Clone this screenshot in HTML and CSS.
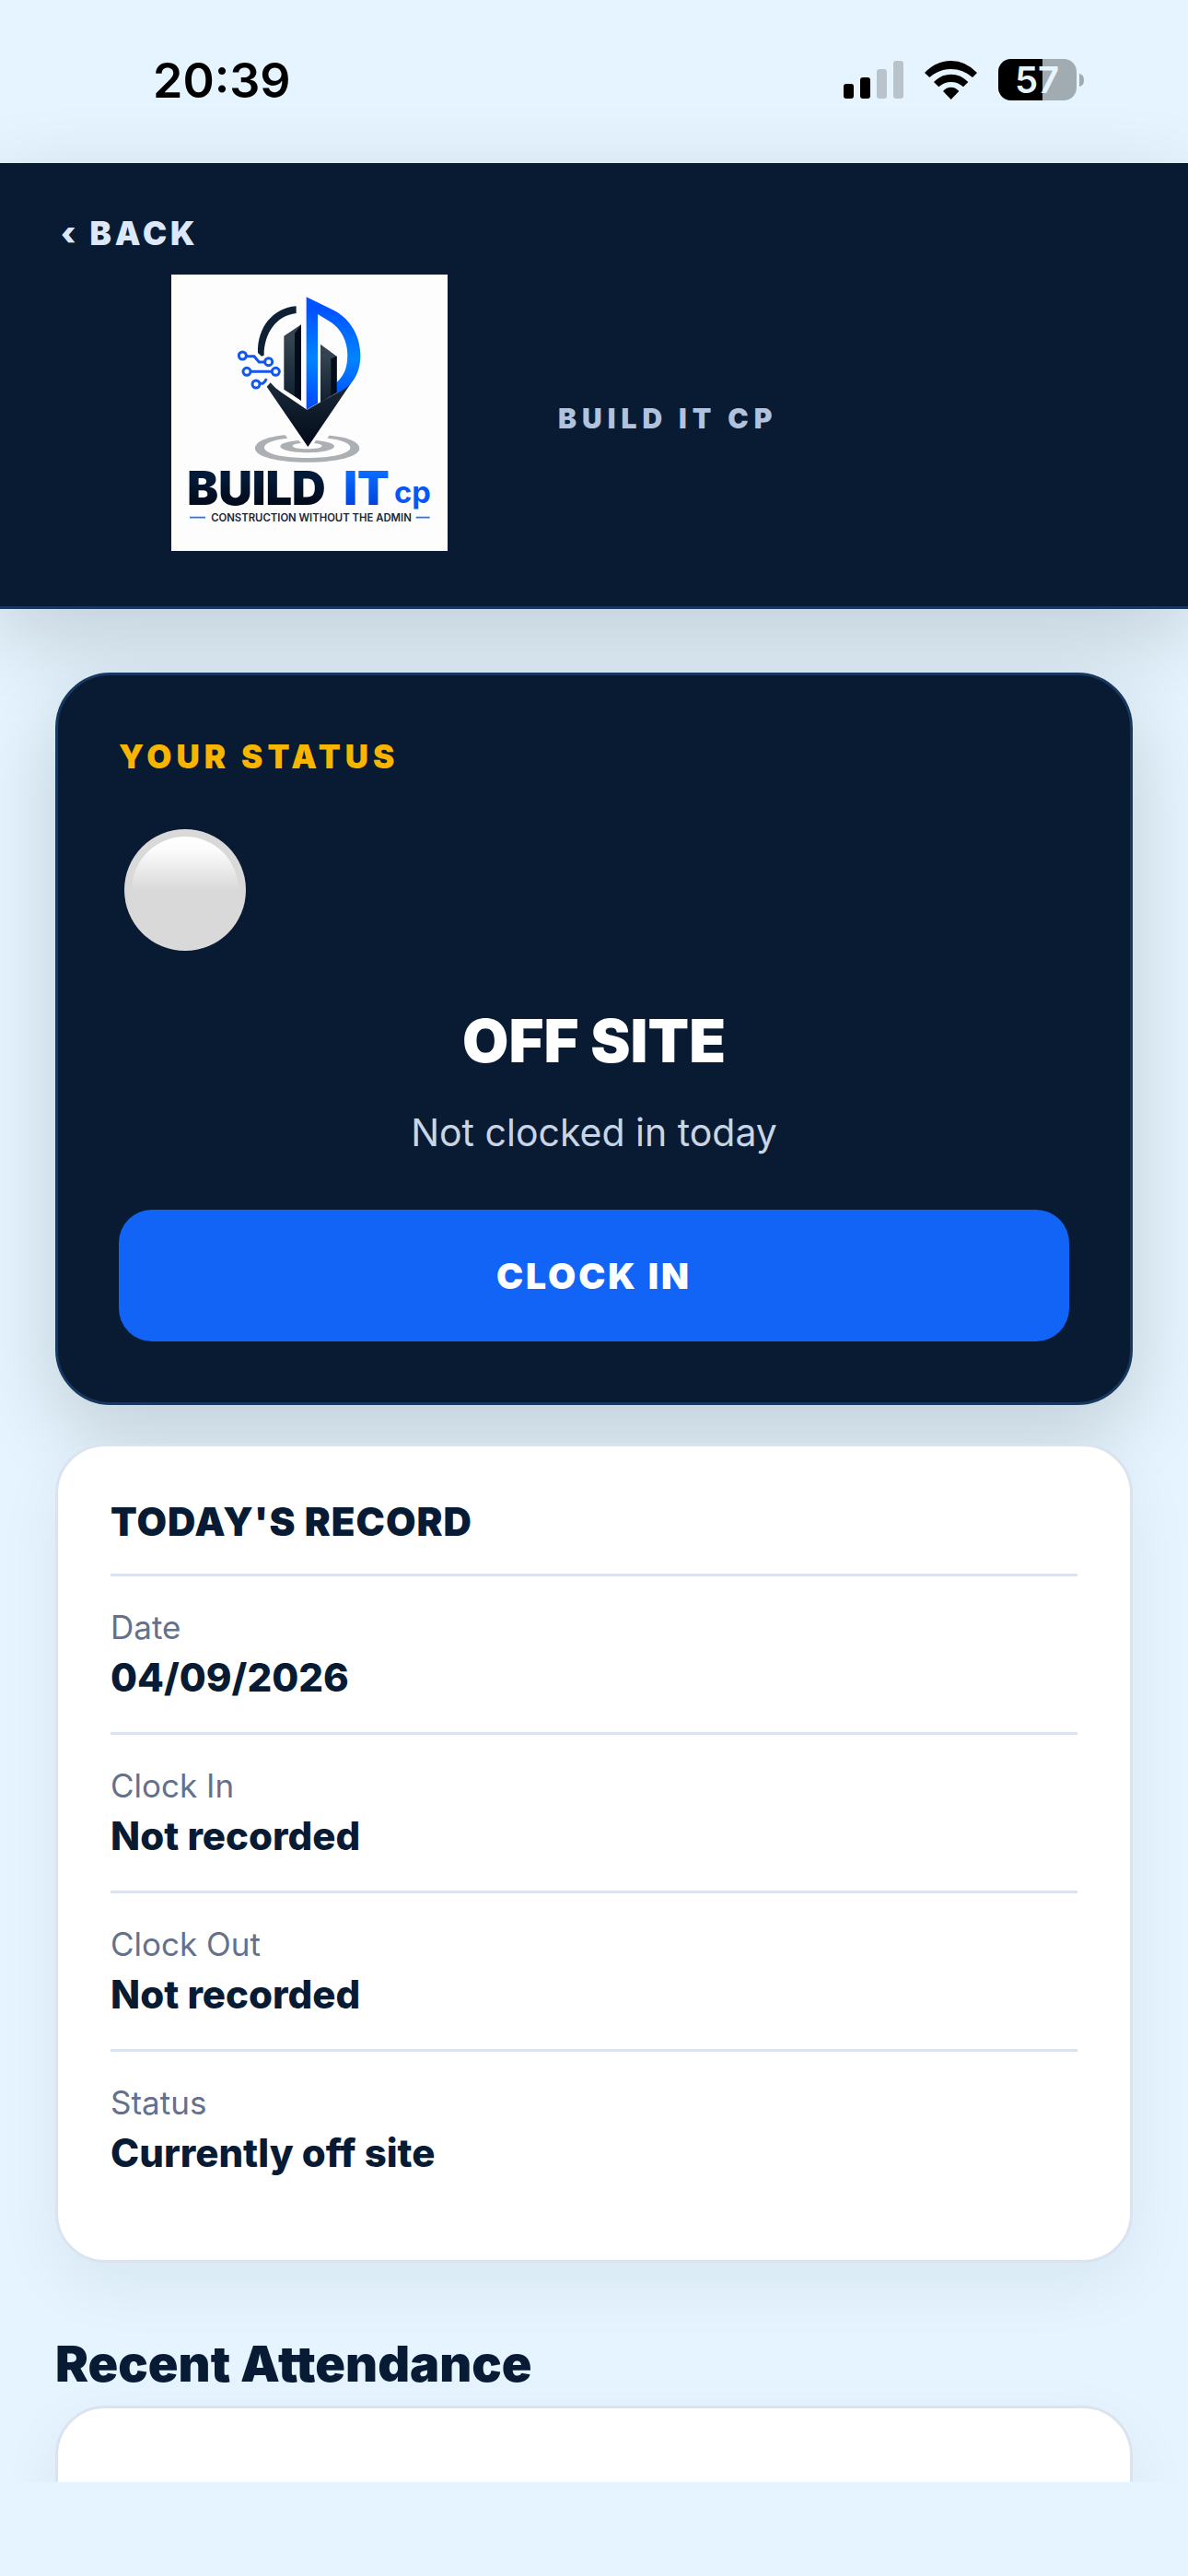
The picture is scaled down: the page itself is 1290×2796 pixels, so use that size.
FILE: index.html
```html
<!DOCTYPE html>
<html lang="en">
<head>
  <meta charset="UTF-8">
  <meta name="viewport" content="width=device-width, initial-scale=1.0">
  <title>Build It CP - Attendance</title>
  <link rel="stylesheet" href="styles.css">
</head>
<body>
  <div class="status-bar">
    <span class="time">20:39</span>
    <div class="status-icons">
      <svg class="signal" width="65" height="41" viewBox="0 0 65 41" aria-hidden="true">
        <rect x="0" y="25" width="11" height="16" rx="3"/>
        <rect x="18" y="18" width="11" height="23" rx="3"/>
        <rect x="36" y="9" width="11" height="32" rx="3" fill="#b8c3cc"/>
        <rect x="54" y="0" width="11" height="41" rx="3" fill="#b8c3cc"/>
      </svg>
      <svg class="wifi" width="57" height="42" viewBox="0 0 171 126" aria-hidden="true">
        <path d="M0 39 Q38 0 86 0 Q134 0 171 39 L156 54 Q125 27 86 27 Q47 27 16 54 Z"/>
        <path d="M30 69 Q54 44 86 44 Q118 44 142 69 L126 85 Q108 69 86 69 Q64 69 46 85 Z"/>
        <path d="M60 99 Q71 86 86 86 Q101 86 112 99 L86 126 Z"/>
      </svg>
      <svg class="battery" width="93" height="45" viewBox="0 0 93 45" aria-hidden="true">
        <defs>
          <clipPath id="shell"><rect width="85" height="45" rx="14"/></clipPath>
        </defs>
        <g clip-path="url(#shell)">
          <rect width="85" height="45" fill="#a0abb2"/>
          <rect width="48" height="45"/>
        </g>
        <path d="M88 16 Q93 17 93 23 Q93 29 88 30 Z" fill="#a0abb2"/>
        <text class="battery-text" x="42" y="37" text-anchor="middle">57</text>
      </svg>
    </div>
  </div>

  <header class="header">
    <a class="back" href="#">‹ BACK</a>
    <div class="brand">
      <svg class="logo" viewBox="18 24 900 900" role="img" aria-label="Build It CP, construction without the admin">
        <defs>
          <linearGradient id="blue" x1="0" y1="0" x2="0" y2="1">
            <stop offset="0.1" stop-color="#0052ff"/>
            <stop offset="0.55" stop-color="#0084ff"/>
            <stop offset="0.9" stop-color="#0052ff"/>
          </linearGradient>
          <linearGradient id="tower" x1="0" y1="0" x2="0" y2="1">
            <stop offset="0.2" stop-color="#35424f"/>
            <stop offset="1" stop-color="#10202f"/>
          </linearGradient>
          <linearGradient id="pin" x1="0" y1="0" x2="0" y2="1">
            <stop offset="0" stop-color="#1c2a3a"/>
            <stop offset="1" stop-color="#000a18"/>
          </linearGradient>
          <linearGradient id="name" x1="0" y1="0" x2="0" y2="1">
            <stop offset="0.3" stop-color="#031a38"/>
            <stop offset="0.9" stop-color="#000814"/>
          </linearGradient>
          <linearGradient id="it" x1="0" y1="0" x2="0" y2="1">
            <stop offset="0.2" stop-color="#0a6cff"/>
            <stop offset="0.85" stop-color="#0040dc"/>
          </linearGradient>
        </defs>
        <rect x="18" y="24" width="900" height="900" fill="#fdfdfd"/>

        <!-- rings under the pin -->
        <g fill="#acafb3">
          <path d="M389 547 C330 552 291 568 291 590 C291 617 367 635 461 635 C555 635 631 617 631 590 C631 568 590 552 532 548 L527 557 C573 562 601 573 601 587 C601 607 540 621 461 621 C382 621 321 607 321 587 C321 573 348 562 397 557 Z"/>
          <path d="M433 564 C398 567 373 574 373 583 C373 595 412 604 461 604 C510 604 549 595 549 583 C549 574 524 567 489 564 L483 573 C500 575 509 578 509 582 C509 588 488 592 461 592 C434 592 413 588 413 582 C413 578 422 575 441 573 Z"/>
        </g>

        <!-- map pin -->
        <path d="M425 127 C350 133 298 195 300 279 L312 290 L320 287 C320 215 360 157 425 150 Z" fill="#0d2034"/>
        <path d="M341 376 Q354 393 376 407 L460 464 L560 408 Q590 390 606 374 L463 585 L329 389 Z" fill="url(#pin)"/>
        <path d="M385 224 L441 187 V434 L385 398 Z" fill="url(#tower)"/>
        <path d="M420 216 L441 187 V434 L420 420 Z" fill="#020d1c"/>
        <path d="M458 97 L550 142 C602 170 634 225 634 288 C634 350 603 393 556 410 V376 C580 355 592 328 592 286 C592 240 570 200 536 178 L495 153 V443 L458 464 Z" fill="url(#blue)"/>
        <path d="M504 251 L557 290 V408 L504 441 Z" fill="url(#tower)"/>
        <path d="M538 298 L557 290 V408 L538 419 Z" fill="#020d1c"/>

        <!-- circuit -->
        <g fill="none" stroke="#1257ee" stroke-width="9">
          <circle cx="250" cy="288" r="12"/>
          <circle cx="335" cy="308" r="12"/>
          <circle cx="264" cy="340" r="12"/>
          <circle cx="358" cy="340" r="12"/>
          <circle cx="294" cy="381" r="12"/>
          <path d="M264 290 H288 L304 309 H322 M278 340 H344 M308 379 H316 Q324 374 328 363"/>
        </g>

        <text class="logo-name" x="70" y="775" fill="url(#name)">BUILD</text>
        <text class="logo-name" x="580" y="775" fill="url(#it)">IT</text>
        <text class="logo-cp" x="744" y="769" fill="#0a55f5">cp</text>
        <path d="M78 815 H129 M815 815 H860" stroke="#2a70f5" stroke-width="5"/>
        <text class="logo-tagline" x="474" y="827" text-anchor="middle" fill="#1b2538">CONSTRUCTION WITHOUT THE ADMIN</text>
      </svg>
      <span class="brand-name">BUILD IT CP</span>
    </div>
  </header>

  <main class="content">
    <section class="status-card">
      <h2 class="eyebrow">YOUR STATUS</h2>
      <div class="status-light"></div>
      <p class="status-title">OFF SITE</p>
      <p class="status-note">Not clocked in today</p>
      <button class="clock-button" type="button">CLOCK IN</button>
    </section>

    <section class="card record">
      <h2 class="record-title">TODAY'S RECORD</h2>
      <dl class="record-list">
        <div class="record-row">
          <dt>Date</dt>
          <dd>04/09/2026</dd>
        </div>
        <div class="record-row">
          <dt>Clock In</dt>
          <dd>Not recorded</dd>
        </div>
        <div class="record-row">
          <dt>Clock Out</dt>
          <dd>Not recorded</dd>
        </div>
        <div class="record-row">
          <dt>Status</dt>
          <dd>Currently off site</dd>
        </div>
      </dl>
    </section>

    <h2 class="section-title">Recent Attendance</h2>
    <section class="card history"></section>
  </main>
</body>
</html>
```
FILE: styles.css
```css
* {
  box-sizing: border-box;
}

body {
  margin: 0;
  height: 100vh;
  padding-bottom: 102px;
  display: flex;
  flex-direction: column;
  font-family: Inter, "Liberation Sans", sans-serif;
  background: #e5f4fe;
  color: #081b34;
}

h2, p, dl, dd {
  margin: 0;
}

/* Phone status bar */
.status-bar {
  flex: none;
  height: 177px;
  padding: 0 113px 4px 166px;
  display: flex;
  align-items: center;
  justify-content: space-between;
}

.time {
  padding-top: 2px;
  font-size: 52px;
  font-weight: 600;
  line-height: 64px;
  color: #000;
}

.status-icons {
  display: flex;
  align-items: center;
  gap: 23px;
}

.battery {
  overflow: visible;
}

.battery-text {
  font-size: 40px;
  font-weight: 600;
  fill: #e5f4fe;
}

/* Header */
.header {
  flex: none;
  padding: 52px 60px 60px;
  background: #081b33;
  border-bottom: 3px solid #17375e;
  box-shadow: 0 30px 90px rgba(0, 0, 0, 0.16);
}

.back {
  display: block;
  width: fit-content;
  padding: 0 6px;
  margin-bottom: 21px;
  font-size: 35px;
  font-weight: 900;
  line-height: 48px;
  letter-spacing: 4px;
  color: #dce8f7;
  text-decoration: none;
}

.brand {
  display: flex;
  align-items: center;
  gap: 120px;
  padding-left: 126px;
}

.logo {
  width: 300px;
  height: 300px;
}

.logo-name {
  font-size: 152px;
  font-weight: 900;
}

.logo-cp {
  font-size: 98px;
  font-weight: 700;
}

.logo-tagline {
  font-size: 34px;
  font-weight: 600;
}

.brand-name {
  padding-top: 12px;
  font-size: 30px;
  font-weight: 900;
  line-height: 36px;
  letter-spacing: 6px;
  color: #b0c2dd;
}

/* Page content */
.content {
  flex: 1;
  min-height: 0;
  padding: 69px 60px 60px;
  overflow-y: auto;
  scrollbar-width: none;
}

.status-card {
  padding: 66px;
  margin-bottom: 42px;
  background: #081b33;
  border: 3px solid #17375e;
  border-radius: 60px;
  box-shadow: 0 30px 90px rgba(0, 0, 0, 0.16);
}

.eyebrow {
  font-size: 35px;
  font-weight: 900;
  line-height: 44px;
  letter-spacing: 5px;
  color: #f7b500;
}

.status-light {
  width: 132px;
  height: 132px;
  margin: 57px 6px 60px;
  padding: 8px;
  border-radius: 50%;
  background: #d9d9d9;
}

.status-light::before {
  content: "";
  display: block;
  height: 100%;
  border-radius: 50%;
  background: linear-gradient(#fff 0%, #fcfcfc 12%, #d9d9d9 50%);
}

.status-title {
  font-size: 65px;
  font-weight: 900;
  line-height: 76px;
  text-align: center;
  color: #fff;
}

.status-note {
  margin-top: 36px;
  font-size: 41px;
  line-height: 50px;
  text-align: center;
  color: #c8d5e6;
}

.clock-button {
  display: block;
  width: 100%;
  height: 143px;
  margin-top: 59px;
  border: none;
  border-radius: 36px;
  background: #1264f6;
  color: #fff;
  font-family: inherit;
  font-size: 39px;
  font-weight: 900;
  letter-spacing: 3px;
}

.card {
  background: #fff;
  border: 3px solid #dae3ef;
  border-radius: 54px;
  box-shadow: 0 24px 72px rgba(8, 27, 51, 0.06);
}

.record {
  padding: 57px;
}

.record-title {
  padding-bottom: 31px;
  font-size: 42px;
  font-weight: 900;
  line-height: 50px;
  letter-spacing: 1px;
}

.record-row {
  height: 172px;
  padding-top: 34px;
  border-top: 3px solid #dae3ef;
}

.record-row dt {
  font-size: 35px;
  line-height: 42px;
  color: #65718a;
}

.record-row dd {
  margin-top: 9px;
  font-size: 42px;
  font-weight: 800;
  line-height: 50px;
}

.section-title {
  margin: 78px 0 13px;
  font-size: 54px;
  font-weight: 900;
  line-height: 64px;
}

.history {
  min-height: 240px;
}
```
